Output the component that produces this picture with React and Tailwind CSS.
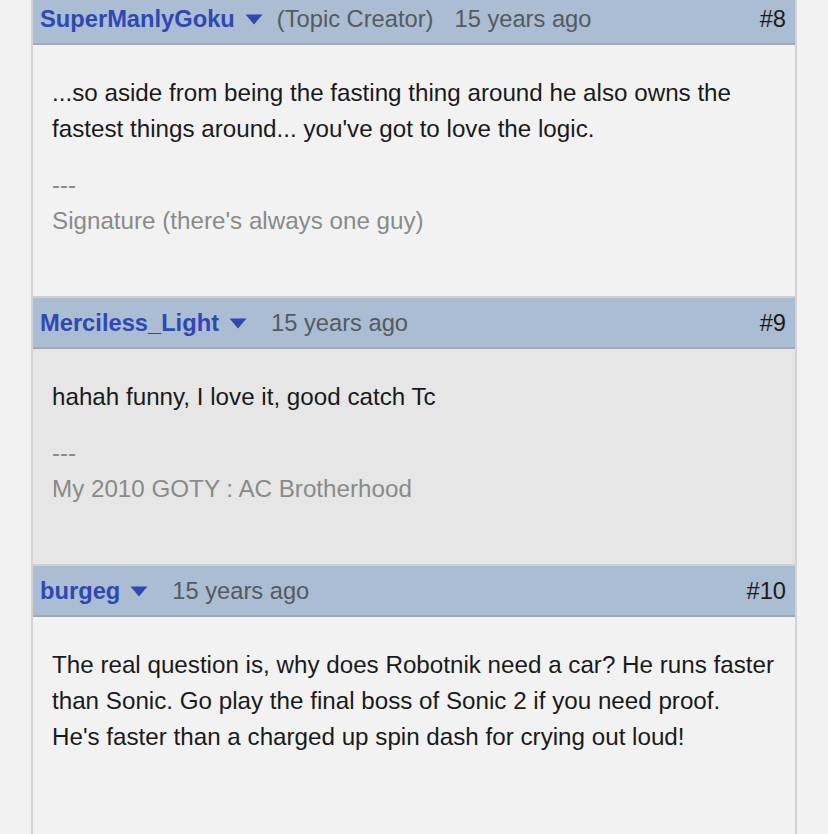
import React from 'react';

const posts = [
    {
        num: 8,
        user: 'SuperManlyGoku',
        creator: true,
        when: '15 years ago',
        lines: ["...so aside from being the fasting thing around he also owns the", "fastest things around... you've got to love the logic."],
        sig: "Signature (there's always one guy)",
        bg: 'bg-[#f2f2f2]',
    },
    {
        num: 9,
        user: 'Merciless_Light',
        when: '15 years ago',
        lines: ['hahah funny, I love it, good catch Tc'],
        sig: 'My 2010 GOTY : AC Brotherhood',
        bg: 'bg-[#e6e6e6]',
    },
    {
        num: 10,
        user: 'burgeg',
        when: '15 years ago',
        lines: [
            'The real question is, why does Robotnik need a car? He runs faster',
            'than Sonic. Go play the final boss of Sonic 2 if you need proof.',
            "He's faster than a charged up spin dash for crying out loud!",
        ],
        bg: 'bg-[#f2f2f2]',
    },
];

function Caret() {
    return (
        <svg width="18" height="11" viewBox="0 0 18 11" className="shrink-0">
            <path d="M0.5 0.5 L17.5 0.5 L9 10.5 Z" fill="#2f48b2" />
        </svg>
    );
}

export default function App() {
    return (
        <div className="min-h-screen bg-[#f2f2f2] overflow-hidden font-['Liberation_Sans',Arial,sans-serif]">
            <div className="ml-[31px] w-[766px] -mt-[8px] border-x-2 border-[#d3d3d3]">
                {posts.map((p) => (
                    <div key={p.num}>
                        {/* header bar */}
                        <div className="h-[53px] bg-[#aabdd3] border-t-2 border-t-[#cfcfcf] border-b-2 border-b-[#a2a9b1] flex items-center pt-[2px] pl-[7px] pr-[9px] text-[23.7px]">
                            <span className="font-bold text-[#2f48b2]">{p.user}</span>
                            <span className="ml-[10px] mr-[14px]"><Caret /></span>
                            {p.creator && <span className="text-[#555a60] mr-[21px]">(Topic Creator)</span>}
                            <span className={`text-[#555a60] ${p.creator ? '' : 'ml-[10px]'}`}>{p.when}</span>
                            <span className="ml-auto text-[#1c1c1c]">#{p.num}</span>
                        </div>

                        {/* body */}
                        <div className={`${p.bg} pl-[19px] pr-4 pt-[30px] pb-[57px] text-[24.2px] leading-[36px]`}>
                            <div className="text-[#1a1a1a]">
                                {p.lines.map((l, i) => <p key={i}>{l}</p>)}
                            </div>
                            {p.sig && (
                                <div className="mt-[20px] text-[#8a8a8a]">
                                    <p>---</p>
                                    <p>{p.sig}</p>
                                </div>
                            )}
                            {!p.sig && <div className="h-[120px]" />}
                        </div>
                    </div>
                ))}
            </div>
        </div>
    );
}
